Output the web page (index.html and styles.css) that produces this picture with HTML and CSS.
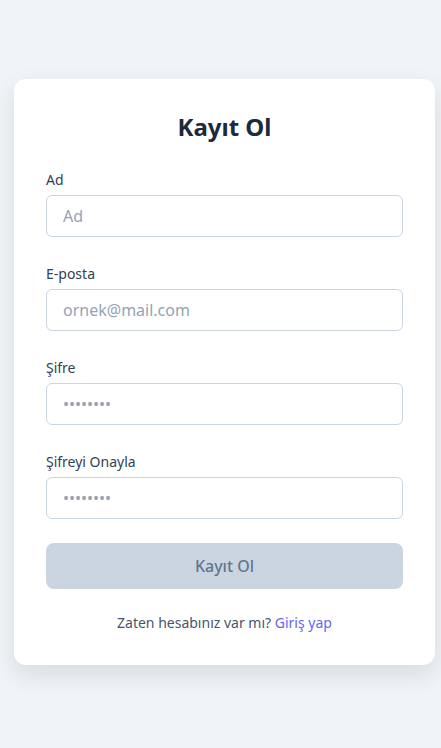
FILE: index.html
```html
<!DOCTYPE html>
<html lang="tr">
<head>
<meta charset="utf-8">
<title>Kayıt Ol</title>
<link rel="stylesheet" href="styles.css">
</head>
<body>
<main class="page">
  <form class="card">
    <h1 class="title">Kayıt Ol</h1>
    <div class="group">
      <label class="label" for="ad">Ad</label>
      <input class="input" id="ad" type="text" placeholder="Ad">
    </div>
    <div class="group">
      <label class="label" for="email">E-posta</label>
      <input class="input" id="email" type="email" placeholder="ornek@mail.com">
    </div>
    <div class="group">
      <label class="label" for="sifre">Şifre</label>
      <input class="input" id="sifre" type="password" placeholder="••••••••">
    </div>
    <div class="group">
      <label class="label" for="sifre2">Şifreyi Onayla</label>
      <input class="input" id="sifre2" type="password" placeholder="••••••••">
    </div>
    <button class="button" type="button" disabled>Kayıt Ol</button>
    <p class="footer">Zaten hesabınız var mı? <a class="link" href="#">Giriş yap</a></p>
  </form>
</main>
</body>
</html>
```

FILE: styles.css
```css
* { box-sizing: border-box; }
html, body {
  margin: 0;
  padding: 0;
  background: #f0f4f8;
  font-family: "Noto Sans", "Open Sans", sans-serif;
}
.page {
  min-height: 748px;
  padding: 79px 6px 0 14px;
}
.card {
  background: #ffffff;
  border-radius: 12px;
  box-shadow: 0 10px 25px rgba(0, 0, 0, 0.1);
  padding: 32px 32px 32px 32px;
  width: 421px;
}
.title {
  margin: 0 0 24px 0;
  font-size: 24px;
  line-height: 32px;
  font-weight: 700;
  text-align: center;
  color: #1e293b;
}
.group {
  margin-bottom: 24px;
  display: flex;
  flex-direction: column;
}
.label {
  font-size: 14px;
  line-height: 26px;
  margin-bottom: 2px;
  color: #334155;
}
.input {
  height: 42px;
  border: 1px solid #cbd5e1;
  border-radius: 6px;
  padding: 0 16px;
  font-family: inherit;
  font-size: 16px;
  color: #1e293b;
  background: #fff;
  outline: none;
}
.input::placeholder { color: #94a3b8; }
.button {
  display: block;
  width: 100%;
  height: 46px;
  border: none;
  border-radius: 8px;
  background: #cbd5e1;
  color: #64748b;
  font-family: inherit;
  font-size: 16px;
  font-weight: 500;
}
.footer {
  margin: 24px 0 0 0;
  text-align: center;
  font-size: 14px;
  line-height: 20px;
  color: #475569;
}
.link {
  color: #6366f1;
  text-decoration: none;
}
```
